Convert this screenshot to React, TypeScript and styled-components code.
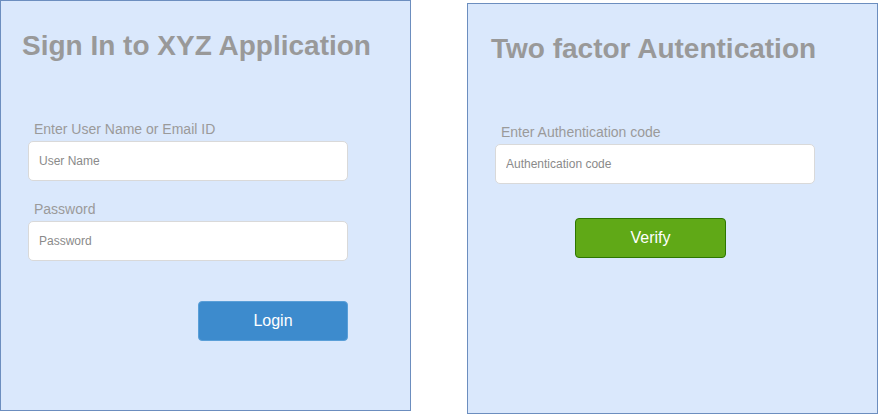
import React from 'react';
import styled, { createGlobalStyle } from 'styled-components';

const GlobalStyle = createGlobalStyle`
  body {
    margin: 0;
    background: #ffffff;
    font-family: 'Liberation Sans', Arial, sans-serif;
  }
`;

const Page = styled.div`
  display: flex;
  align-items: flex-start;
  gap: 56px;
`;

const Panel = styled.section<{ $top?: number }>`
  box-sizing: border-box;
  width: 411px;
  height: 411px;
  margin-top: ${(p) => p.$top ?? 0}px;
  padding: 29px 0 0 27px;
  background: #dae8fc;
  border: 1px solid #6c8ebf;
  display: flex;
  flex-direction: column;
  align-items: flex-start;
`;

const Title = styled.h1<{ $indent?: number }>`
  margin: 0 0 0 ${(p) => p.$indent ?? -6}px;
  font-size: 28px;
  line-height: 32px;
  font-weight: bold;
  color: #999999;
`;

const Field = styled.label<{ $gap: number }>`
  display: flex;
  flex-direction: column;
  gap: 4px;
  margin-top: ${(p) => p.$gap}px;
`;

const FieldLabel = styled.span`
  padding-left: 6px;
  font-size: 14px;
  line-height: 16px;
  color: #9a9a9a;
`;

const Input = styled.input`
  box-sizing: border-box;
  width: 320px;
  height: 40px;
  padding: 0 10px;
  border: 1px solid #d9d9d9;
  border-radius: 5px;
  background: #ffffff;
  font-family: 'Liberation Sans', Arial, sans-serif;
  font-size: 12px;
  outline: none;

  &::placeholder {
    color: #8a8a8a;
  }
`;

const ButtonRow = styled.div<{ $gap: number; $left: number }>`
  margin-top: ${(p) => p.$gap}px;
  margin-left: ${(p) => p.$left}px;
`;

const ActionButton = styled.button<{ $fill: string; $stroke: string; $width?: number }>`
  box-sizing: border-box;
  width: ${(p) => p.$width ?? 150}px;
  height: 40px;
  border: 1px solid ${(p) => p.$stroke};
  border-radius: 4px;
  background: ${(p) => p.$fill};
  color: #ffffff;
  font-family: 'Liberation Sans', Arial, sans-serif;
  font-size: 16px;
  cursor: pointer;
`;

const App: React.FC = () => (
  <>
    <GlobalStyle />
    <Page>
      <Panel>
        <Title>Sign In to XYZ Application</Title>
        <Field $gap={59}>
          <FieldLabel>Enter User Name or Email ID</FieldLabel>
          <Input placeholder="User Name" />
        </Field>
        <Field $gap={20}>
          <FieldLabel>Password</FieldLabel>
          <Input type="password" placeholder="Password" />
        </Field>
        <ButtonRow $gap={40} $left={170}>
          <ActionButton $fill="#3d8bcd" $stroke="#5a9fd8">Login</ActionButton>
        </ButtonRow>
      </Panel>
      <Panel $top={3}>
        <Title $indent={-4}>Two factor Autentication</Title>
        <Field $gap={59}>
          <FieldLabel>Enter Authentication code</FieldLabel>
          <Input placeholder="Authentication code" />
        </Field>
        <ButtonRow $gap={34} $left={80}>
          <ActionButton $fill="#60a917" $stroke="#2d7600" $width={151}>
            Verify
          </ActionButton>
        </ButtonRow>
      </Panel>
    </Page>
  </>
);

export default App;
